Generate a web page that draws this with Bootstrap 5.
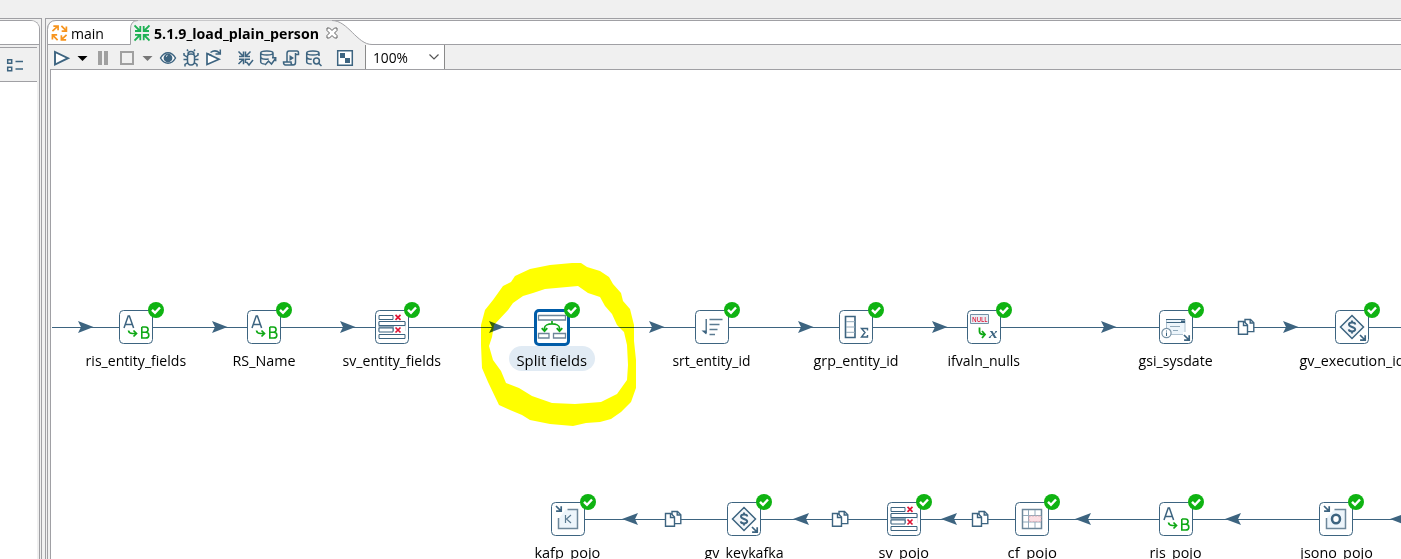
<!DOCTYPE html>
<html lang="en">
<head>
<meta charset="utf-8">
<meta name="viewport" content="width=device-width, initial-scale=1">
<title>5.1.9_load_plain_person</title>
<link href="https://cdn.jsdelivr.net/npm/bootstrap@5.3.0/dist/css/bootstrap.min.css" rel="stylesheet">
<style>
:root{--ink:#3d6480;--edge:#a0a0a4;--chrome:#f0f0f0}
body{background:var(--chrome);font-family:"Open Sans","Noto Sans",sans-serif;font-size:14px;color:#000;height:559px}
svg{display:block;flex:none}
.topstrip{height:18px}
.workspace{height:541px;gap:3px}
.side-pane{width:42px;border-top:1px solid var(--edge);border-right:1px solid var(--edge);padding-top:1px;padding-right:1px}
.side-inner{border-top:1px solid var(--edge);border-right:1px solid var(--edge);border-top-right-radius:9px;padding-right:2px;height:540px}
.side-tabs{height:24px;border-bottom:1px solid var(--edge);background:#fff;margin-right:-2px;border-top-right-radius:8px}
.side-tools{height:35px;margin-top:2px;border-top:1px solid var(--edge);border-bottom:1px solid var(--edge);padding:9px 0 0 6px}
.side-body{height:477px}
.editor-pane{border-top:1px solid var(--edge);border-left:1px solid var(--edge);padding:1px 0 0 1px;min-width:0}
.editor-inner{border-left:1px solid var(--edge);border-top-left-radius:9px;height:540px}
.tabstrip{height:25px}
.tabshape{left:-1px;top:0}
.tab-main{width:82px;padding:1px 0 0 3px}
.tab-active{padding:1px 0 0 4px}
.toolbar-row{height:24px}
.zoom-box{width:80px;height:24px;background:#fff;border-left:1px solid #8a8a8a;border-right:1px solid #8a8a8a;padding:0 4px 0 7px}
.canvas-pane{margin-left:2px;border-left:1px solid var(--edge);border-top:1px solid var(--edge);background:#fff;height:490px}
.canvas-pane text{font-family:"Open Sans","Noto Sans",sans-serif}
.ring{mix-blend-mode:multiply}
</style>
</head>
<body class="overflow-hidden">
<svg width="0" height="0" class="position-absolute">
<defs>
<g id="box"><rect x="-16.5" y="-16.5" width="33" height="33" rx="4" fill="#fff" stroke="#3d6480"/></g>
<g id="ok"><circle cx="20" cy="-17" r="8" fill="#0fb312"/><path d="M16 -17.2l3 3 5-5.3" fill="none" stroke="#fff" stroke-width="2.4"/></g>
<path id="fwd" d="M0 -6L15.5 0L0 6L3 0Z" fill="#3d6480"/>
<path id="back" d="M0 0L16 -6L13 0L16 6Z" fill="#3d6480"/>
<g id="copies" fill="#fff" stroke="#3d6480" stroke-width="1.4"><path d="M-1 -7.500h5.500l3.300 3.300v8.800h-8.800z"/><path d="M4.200 -7.500v3.500h3.500" fill="none"/><path d="M-7.500 -5.500h5.500l3.500 3.500v9.200h-9z"/><path d="M-2.500 -5.500v4h4" fill="none"/></g>
<g id="se" fill="none" stroke="#3d6480" stroke-width="1.700"><path d="M0 0l5 5M5.200 .3v4.900h-5.100"/></g>
<g id="ab"><use href="#box"/><path d="M-12 1l4.200-12h1.200l4.200 12M-10.600 -2.600h6.800" fill="none" stroke="#3d6480" stroke-width="1.500"/><path d="M-7.500 3.500c.3 2.400 1.800 3 4 3h4M-2.500 3.500l3 3-3 3" fill="none" stroke="#0fa815" stroke-width="1.700"/><path d="M5.800 0v11h3.800c4.300 0 4.300-5.600 0-5.700h-3.800M5.800 0h3.500c3.700 0 3.700 5.200 0 5.300" fill="none" stroke="#0fa815" stroke-width="1.600"/><use href="#ok"/></g>
<g id="sel"><use href="#box"/><path d="M-13.500 -5h27v9h-27z" fill="#8ea5b6"/><path d="M-13 -11.500h14v4h-14zM-13 -5.500h26v4h-26zM-13 1h14v4h-14zM-13 7.500h26v4h-26z" fill="#fff" stroke="#3d6480"/><path d="M2 -.9h11.500v7.500h-11.500z" fill="#fff"/><path d="M3.500 -12.200l5 5m0 -5l-5 5M3.500 .5l5 5m0 -5l-5 5" stroke="#e01435" stroke-width="1.700"/><use href="#ok"/></g>
<g id="var"><use href="#box"/><path d="M0 -11.500L11.500 0L0 11.500L-11.500 0Z" fill="#f3f6f9" stroke="#3d6480" stroke-width="1.500"/><path d="M3.200 -2.500c0-2.600-6.200-2.600-6.200 0c0 2.900 6.200 2 6.200 5c0 2.600-6.200 2.600-6.400-.1M0 -6.500v2M0 4.500v2" fill="none" stroke="#3d6480" stroke-width="2"/><path d="M6 13.500h8v-8l-3 1z" fill="#fff"/><use href="#se" x="8" y="8"/><use href="#ok"/></g>
</defs>
</svg>

<div class="topstrip"></div>
<div class="workspace d-flex">
  <aside class="side-pane flex-shrink-0">
    <div class="side-inner">
      <div class="side-tabs"></div>
      <div class="side-tools">
        <svg width="18" height="16" viewBox="6 57 18 16" fill="none" stroke="#3d6480" stroke-width="1.500"><path d="M7.700 59.700h4v3.600h-4zM7.700 67.200h4v3.600h-4zM15.500 61.500h7.500M15.500 69h7.500"/></svg>
      </div>
      <div class="side-body bg-white"></div>
    </div>
  </aside>
  <main class="editor-pane flex-grow-1">
    <div class="editor-inner">
      <div class="tabstrip position-relative">
        <svg class="tabshape position-absolute" width="1354" height="25" viewBox="47 20 1354 25"><path d="M47.500 45V29.500Q48 20.500 56 20.500H1402V45Z" fill="#fff" stroke="#a0a0a4"/><path d="M130.500 45V30Q130.500 20.500 138 20.500H332C348 20.500 357 44.500 372 44.500H1402V46H130.500Z" fill="#f0f0f0"/><path d="M47 44.500H130.500V29Q130.500 20.500 138 20.500M332 20.500C348 20.500 357 44.500 372 44.500H1402" fill="none" stroke="#a0a0a4"/></svg>
        <div class="d-flex h-100 position-relative">
          <div class="tab-main d-flex align-items-center">
            <svg width="17" height="18" viewBox="0 0 18 18" fill="none" stroke="#f7941d" stroke-width="1.800"><path d="M1.500 7l5.500-5M2.500 1.700h5v4.500M11 1.500l5 5M16.300 2v5h-5M16.500 11l-5.500 5M16 16.300h-5v-5M7 16.500l-5-5M1.500 16v-5h5"/></svg>
            <svg width="41" height="24"><text x="3" y="18" textLength="33" lengthAdjust="spacingAndGlyphs">main</text></svg>
          </div>
          <div class="tab-active d-flex align-items-center">
            <svg width="16" height="18" viewBox="0 0 16 18" fill="none" stroke="#1eb154" stroke-width="1.800"><path d="M.5 1.500l5.500 5.500M1 7h5.300V2M15.500 1.500L10 7M15 7H9.700V2M.5 16.500L6 11M1 10.800h5.300v5.500M15.500 16.500L10 11M15 10.800H9.700v5.500"/></svg>
            <svg width="172" height="24"><text x="4" y="18" font-weight="700" textLength="165" lengthAdjust="spacingAndGlyphs">5.1.9_load_plain_person</text></svg>
            <svg class="ms-1" width="12" height="12" viewBox="0 0 12 12"><path d="M1 1h2.500L6 3.500L8.500 1H11v2.500L8.500 6L11 8.500V11H8.500L6 8.500L3.500 11H1V8.500L3.500 6L1 3.500Z" fill="#fff" stroke="#606060"/></svg>
          </div>
        </div>
      </div>
      <div class="toolbar-row d-flex align-items-start">
        <svg width="317" height="24" viewBox="48 45 317 24" fill="none" stroke="#3d6480" stroke-width="1.500">
          <path d="M55 52v12.500L68 58.200Z" stroke-width="1.900" fill="#fff"/>
          <path d="M77.500 56h10l-5 5z" fill="#000" stroke="none"/>
          <path d="M98 51h4v14h-4zM104 51h4v14h-4z" fill="#a0a0a0" stroke="none"/>
          <path d="M121 52h12v12h-12z" stroke="#a0a0a0" stroke-width="2"/>
          <path d="M142.500 56h10l-5 5z" fill="#777" stroke="none"/>
          <path d="M160.500 58c4-7 11-7 15 0c-4 7-11 7-15 0Z" fill="#fff"/><circle cx="168" cy="58" r="4.400" fill="#3d6480" stroke="none"/><path d="M166 56.500l1.500-1.200" stroke="#fff" stroke-width="1"/>
          <path d="M187.500 56q0-2 3.500-2t3.500 2v5q0 4-3.500 4t-3.500-4zM188 54q0-2.500 3-2.500t3 2.500M188 51l-1-1.500M194 51l1-1.500M187 57l-3-2v-2M195 57l3-2v-2M187.500 59.500h-4M194.500 59.500h4M188 62.500l-3 2v2M194 62.500l3 2v2"/>
          <path d="M207 53.500V64.500L219 59.200Z" fill="#fff" stroke-width="1.700"/><path d="M207 53.500L211.500 55.500M210.500 52.500q5-3.500 9 .5M220.300 49.500v4.500h-4.800"/>
          <path d="M238.500 51.500l4.500 4.500M239 56.500h4.500v-5M250.500 51.500L246 56M250 56.500h-4.500v-5M238.500 64l4.500-4.500M239 59.200h4.500v5M245.500 63v-3.800h4.500M246.500 62l2.500 3 4-5"/>
          <path d="M260.700 53v9c0 1.500 3 2 4 2M273 53v4M260.700 53c0-2.700 12.300-2.700 12.300 0c0 2.700-12.300 2.700-12.300 0M260.700 57.500c1.500 2 5 2 8 1.500M265 65l3.500-4 3 3 4-5.500M272 57.700h3.700v3.500"/>
          <path d="M287 61.500V53.500q0-2.500 2-2.500h8q1.500 0 1.500 2v1.500h-3M295.500 53v9.500q0 2.500-2.500 2.500h-7.500q-2 0-2-3h7.500q0 3 2 3"/><path d="M289.500 55l4.500 3-4.500 3z" fill="#3d6480" stroke="none"/>
          <path d="M306.700 53v9c0 1.500 3 2 5 2M319 53v3M306.700 53c0-2.700 12.300-2.700 12.300 0c0 2.700-12.300 2.700-12.300 0M306.700 57.500c1.500 2 3 2 5 1.500"/><circle cx="316.500" cy="61" r="2.900"/><path d="M318.500 63l3 3"/>
          <path d="M337.700 50.700h14.600v14.600h-14.600z" fill="#fff"/><path d="M340 53h5v5h-5zM345 58h5v5h-5z" fill="#3d6480" stroke="none"/>
        </svg>
        <div class="zoom-box d-flex align-items-center justify-content-between">
          <svg width="38" height="24"><text x="0" y="18" textLength="35" lengthAdjust="spacingAndGlyphs">100%</text></svg>
          <svg width="12" height="8" viewBox="0 0 12 8"><path d="M1.500 1.500L6 6L10.500 1.500" fill="none" stroke="#555" stroke-width="1.200"/></svg>
        </div>
      </div>
      <div class="canvas-pane overflow-hidden">
        <svg width="1350" height="489" viewBox="51 70 1350 489">
          <path d="M52 327.500H1401M568 519.500H1401" stroke="#3d6480" stroke-width="1.200"/>
          <use href="#fwd" x="78" y="327"/><use href="#fwd" x="212" y="327"/><use href="#fwd" x="340" y="327"/><use href="#fwd" x="489" y="327"/><use href="#fwd" x="649" y="327"/><use href="#fwd" x="798" y="327"/><use href="#fwd" x="932" y="327"/><use href="#fwd" x="1101" y="327"/><use href="#fwd" x="1283" y="327"/>
          <use href="#back" x="622" y="519"/><use href="#back" x="793" y="519"/><use href="#back" x="941" y="519"/><use href="#back" x="1075" y="519"/><use href="#back" x="1225" y="519"/><use href="#back" x="1390" y="519"/>
          <use href="#copies" x="1246" y="327"/><use href="#copies" x="673" y="519"/><use href="#copies" x="840" y="519"/><use href="#copies" x="980" y="519"/>

          <use href="#ab" x="136" y="327"/><use href="#ab" x="264" y="327"/><use href="#sel" x="392" y="327"/>
          <g transform="translate(552 327)">
            <rect x="-16.500" y="-16.500" width="33" height="34" rx="3.500" fill="#fff" stroke="#005ca8" stroke-width="3"/>
            <path d="M-13.500 -11.500h27v4.500h-27zM-13.500 6.500h10.500v4.500h-10.500zM1.500 6.500h12v4.500h-12z" fill="#fff" stroke="#6d8599" stroke-width="1.300"/>
            <path d="M0 -6v2.500M-7.500 3.500v-2.500c0-5.500 15-5.500 15 0v2.500M-10.300 1.200l2.800 3 2.800-3M4.700 1.200l2.800 3 2.800-3" fill="none" stroke="#0fa815" stroke-width="1.700"/>
            <use href="#ok"/>
          </g>
          <g transform="translate(712 327)"><use href="#box"/><path d="M-5.800 -8v14.500" fill="none" stroke="#3d6480" stroke-width="1.300"/><path d="M-10.500 3.500h4.700v4z" fill="#3d6480"/><path d="M-2.500 -7.500h13M-2.500 -2.500h10M-2.500 2.500h8M-2.500 7.500h5.500" stroke="#5b7b92" stroke-width="1.600"/><use href="#ok"/></g>
          <g transform="translate(856 327)"><use href="#box"/><path d="M-10.500 -10.500h9.500v21h-9.500z" fill="#fff" stroke="#3d6480" stroke-width="1.600"/><path d="M-10 -5.300h9M-10 0h9M-10 5.300h9" stroke="#91a9ba"/><path d="M11.500 3.500V1.500H5.500L9 5.500L5.500 10H11.500V8" fill="none" stroke="#3d6480" stroke-width="1.400"/><use href="#ok"/></g>
          <g transform="translate(984 327)"><use href="#box"/><path d="M-13.500 -12.500h18v9h-18z" fill="#e8f0f7" stroke="#7490a5"/><text x="-12" y="-5.500" font-size="6.500" font-weight="600" fill="#e01435" textLength="15.500" lengthAdjust="spacingAndGlyphs">NULL</text><path d="M-4.500 .5v4q0 3 5 3M-2 4l3 3.500-3 3.500" fill="none" stroke="#0fa815" stroke-width="1.800"/><text x="5" y="11" style="font-family:'Liberation Serif',serif" font-size="15" font-style="italic" font-weight="700" fill="#3d6480" textLength="8.500" lengthAdjust="spacingAndGlyphs">x</text><use href="#ok"/></g>
          <g transform="translate(1176 327)"><use href="#box"/><path d="M-9.500 -7.500h18.500v15h-18.500z" fill="#edf5fb" stroke="#afc2d0"/><path d="M-10 -7.500h19M-9.500 -4.500h18.500" stroke="#3d6480"/><path d="M5 -6.500h4v2h-4z" fill="#3d6480"/><path d="M-6 -.5h10M-3 3.500h5" stroke="#91a9ba"/><circle cx="-9.500" cy="6" r="4.600" fill="#fff" stroke="#7892a5" stroke-width="1.200"/><path d="M-9.500 3.500v1M-9.500 5.500v3.500" stroke="#3d6480"/><path d="M7 5h7v9h-7z" fill="#fff"/><use href="#se" x="8" y="8"/><use href="#ok"/></g>
          <use href="#var" x="1352" y="327"/>

          <g transform="translate(568 519)"><use href="#box"/><path d="M-9.500 0v9.500h19v-19h-12z" fill="#edf5fb"/><path d="M-9.500 -1v10.500h19v-19h-10" fill="none" stroke="#6d879a" stroke-width="1.500"/><path d="M-2.500 -4v8M3 -4l-4.500 4 4.500 4" fill="none" stroke="#5b7b92" stroke-width="1.200"/><use href="#se" x="-12" y="-13"/><use href="#ok"/></g>
          <use href="#var" x="744" y="519"/><use href="#sel" x="904" y="519"/>
          <g transform="translate(1032 519)"><use href="#box"/><path d="M-9.500 -9.500h19v19h-19z" fill="#fff" stroke="#6d879a" stroke-width="1.500"/><path d="M-3.500 -9v18M3 -9v18M-9 -3.500h18M-9 3h18" stroke="#91a9ba"/><path d="M-3 -3h12v5.500h-12z" fill="#fcdfe4" stroke="#d3a6b0" stroke-dasharray="2 1" stroke-width=".8"/><use href="#ok"/></g>
          <use href="#ab" x="1176" y="519"/>
          <g transform="translate(1336 519)"><use href="#box"/><path d="M-9.500 -1v10.500h19v-19h-11" fill="#edf5fb" stroke="#6d879a" stroke-width="1.500"/><ellipse cx="0" cy="0" rx="4" ry="4.300" fill="#fff" stroke="#3d6480" stroke-width="2.500"/><use href="#se" x="-12" y="-13"/><use href="#ok"/></g>

          <rect x="509" y="346" width="86" height="25" rx="12.500" fill="#e1ebf4"/>
          <g font-size="14">
            <text x="85.600" y="366" textLength="100.500" lengthAdjust="spacingAndGlyphs">ris_entity_fields</text>
            <text x="232.500" y="366" textLength="63" lengthAdjust="spacingAndGlyphs">RS_Name</text>
            <text x="342.600" y="366" textLength="98.500" lengthAdjust="spacingAndGlyphs">sv_entity_fields</text>
            <text x="516.500" y="366" textLength="70.500" lengthAdjust="spacingAndGlyphs">Split fields</text>
            <text x="672.400" y="366" textLength="78" lengthAdjust="spacingAndGlyphs">srt_entity_id</text>
            <text x="813.600" y="366" textLength="85" lengthAdjust="spacingAndGlyphs">grp_entity_id</text>
            <text x="947.500" y="366" textLength="72.500" lengthAdjust="spacingAndGlyphs">ifvaln_nulls</text>
            <text x="1138.600" y="366" textLength="74" lengthAdjust="spacingAndGlyphs">gsi_sysdate</text>
            <text x="1299.600" y="366" textLength="105" lengthAdjust="spacingAndGlyphs">gv_execution_id</text>
            <text x="534.400" y="558" textLength="66" lengthAdjust="spacingAndGlyphs">kafp_pojo</text>
            <text x="704.600" y="558" textLength="79" lengthAdjust="spacingAndGlyphs">gv_keykafka</text>
            <text x="878.500" y="558" textLength="50.500" lengthAdjust="spacingAndGlyphs">sv_pojo</text>
            <text x="1007.500" y="558" textLength="49.500" lengthAdjust="spacingAndGlyphs">cf_pojo</text>
            <text x="1149.500" y="558" textLength="52" lengthAdjust="spacingAndGlyphs">ris_pojo</text>
            <text x="1300.300" y="558" textLength="72.500" lengthAdjust="spacingAndGlyphs">jsono_pojo</text>
          </g>
          <path class="ring" fill="#ff0" fill-rule="evenodd" d="M572 263L581 263L587 267L600 271L609 277L613 284L621 293L623 301L630 309L634 325V341L636 360V388L631 402L621 412L611 419L600 422L586 423L573 426L550 424L530 420L522 415L510 410L499 405L488 382L482 368L481 345V325L485 310L493 300L503 286L511 282L515 276L530 269L550 265ZM578 286L588 293L600 297L605 306L612 314L617 325L624 332L627 345L628 365L627 380L617 394L601 402L575 404L552 403L532 396L519 388L506 383L501 371L493 360L489 346L492 337L494 325L508 310L513 303L523 296L533 293L545 289Z"/>
        </svg>
      </div>
    </div>
  </main>
</div>
<script src="https://cdn.jsdelivr.net/npm/bootstrap@5.3.0/dist/js/bootstrap.bundle.min.js"></script>
</body>
</html>
